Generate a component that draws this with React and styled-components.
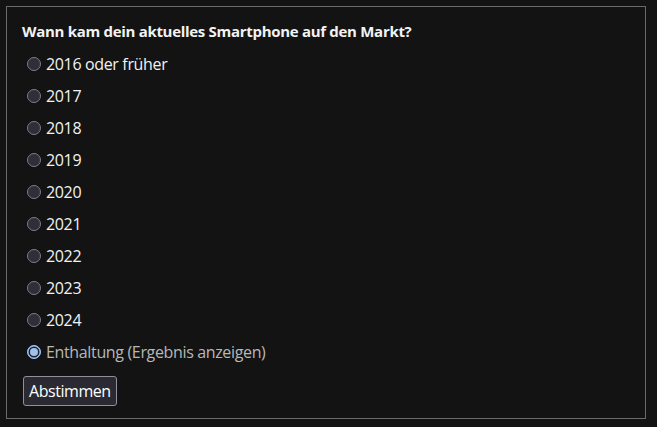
import React, { useState } from "react";
import styled, { createGlobalStyle } from "styled-components";

const Global = createGlobalStyle`
  html, body { margin: 0; padding: 0; background: #131313; }
  body { font-family: "Open Sans", "Noto Sans", sans-serif; color: #eeeeee; }
`;

const Page = styled.div`
  padding: 6px 11px 8px 6px;
  width: 657px;
  height: 427px;
  box-sizing: border-box;
`;

const Box = styled.form`
  border: 1px solid #6a6a6a;
  height: 413px;
  box-sizing: border-box;
  padding: 14px 15px 0 15px;
  display: flex;
  flex-direction: column;
`;

const Title = styled.div`
  font-weight: 700;
  font-size: 15px;
  letter-spacing: -0.3px;
  line-height: 20px;
  margin: 0 0 7px 0;
  color: #f2f2f2;
`;

const Options = styled.div`
  display: flex;
  flex-direction: column;
`;

const Option = styled.label`
  display: flex;
  align-items: center;
  height: 32px;
  font-size: 16px;
  letter-spacing: -0.35px;
  color: ${(p) => (p.$checked ? "#b8b8b8" : "#f2f2f2")};
  cursor: pointer;
`;

const Radio = styled.span`
  flex: none;
  width: 14px;
  height: 14px;
  box-sizing: border-box;
  border-radius: 50%;
  margin: 0 5px 0 5px;
  border: 1px solid ${(p) => (p.$checked ? "#99c8ff" : "#7d7d86")};
  background: ${(p) => (p.$checked ? "#99c8ff" : "#302f39")};
  display: flex;
  align-items: center;
  justify-content: center;
  &::after {
    content: "";
    width: 8px;
    height: 8px;
    border-radius: 50%;
    background: ${(p) => (p.$checked ? "#a3c0e6" : "transparent")};
    box-shadow: ${(p) => (p.$checked ? "0 0 0 1.5px #1e2230" : "none")};
  }
`;

const Button = styled.button`
  align-self: flex-start;
  margin: 8px 0 0 1px;
  height: 30px;
  padding: 0 5px;
  font-family: "Open Sans", "Noto Sans", sans-serif;
  font-size: 16px;
  letter-spacing: -0.45px;
  color: #ffffff;
  background: #2b2a33;
  border: 1px solid #8f8f9d;
  border-radius: 3px;
`;

const items = [
  "2016 oder früher",
  "2017",
  "2018",
  "2019",
  "2020",
  "2021",
  "2022",
  "2023",
  "2024",
  "Enthaltung (Ergebnis anzeigen)",
];

export default function App() {
  const [sel, setSel] = useState(9);
  return (
    <>
      <Global />
      <Page>
        <Box onSubmit={(e) => e.preventDefault()}>
          <Title>Wann kam dein aktuelles Smartphone auf den Markt?</Title>
          <Options>
            {items.map((t, i) => (
              <Option key={t} $checked={sel === i} onClick={() => setSel(i)}>
                <Radio $checked={sel === i} />
                {t}
              </Option>
            ))}
          </Options>
          <Button type="submit">Abstimmen</Button>
        </Box>
      </Page>
    </>
  );
}
